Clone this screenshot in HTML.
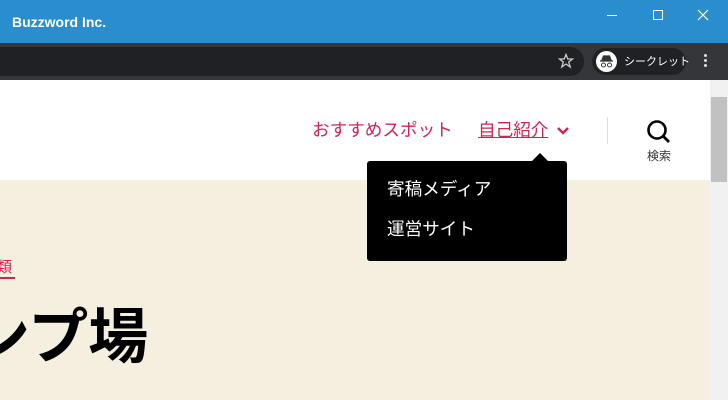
<!DOCTYPE html>
<html><head><meta charset="utf-8"><style>
*{margin:0;padding:0;box-sizing:border-box}
body{width:728px;height:400px;overflow:hidden;position:relative;font-family:"Liberation Sans","Noto Sans CJK JP",sans-serif;background:#fff}
.a{position:absolute}
</style></head><body>
<div class="a" style="left:0;top:0;width:728px;height:43px;background:#2a8dcd"></div>
<div class="a" style="left:12px;top:14px;color:#fff;font-size:14px;font-weight:bold">Buzzword Inc.</div>
<div class="a" style="left:607px;top:15px;width:10px;height:1px;background:#fff"></div>
<div class="a" style="left:653px;top:10px;width:10px;height:10px;border:1px solid #fff"></div>
<svg class="a" style="left:697px;top:9px" width="12" height="12"><path d="M1 1L11 11M11 1L1 11" stroke="#fff" stroke-width="1.2"/></svg>
<div class="a" style="left:0;top:43px;width:728px;height:37px;background:#35363a"></div>
<div class="a" style="left:-20px;top:47px;width:604px;height:29px;border-radius:14px;background:#202124"></div>
<svg class="a" style="left:558px;top:53px" width="16" height="16"><path d="M8 1.5L9.8 6H14.5L10.7 9L12.2 14L8 11L3.8 14L5.3 9L1.5 6H6.2Z" stroke="#ccc" stroke-width="1.3" fill="none"/></svg>
<div class="a" style="left:592px;top:48px;width:94px;height:27px;border-radius:14px;background:#202124"></div>
<div class="a" style="left:596px;top:51px;width:21px;height:21px;border-radius:50%;background:#fff"></div>
<svg class="a" style="left:596px;top:51px" width="21" height="21"><path d="M6 9L7.5 5H13.5L15 9Z M4 10H17" stroke="#333" stroke-width="1.2" fill="#333"/><circle cx="7.5" cy="14" r="2" stroke="#333" fill="none"/><circle cx="13.5" cy="14" r="2" stroke="#333" fill="none"/></svg>
<div class="a" style="left:624px;top:53px;color:#fff;font-size:11px">シークレット</div>
<div class="a" style="left:704px;top:54px;width:3px;height:3px;background:#ddd;border-radius:50%;box-shadow:0 5px 0 #ddd,0 10px 0 #ddd"></div>
<div class="a" style="left:0;top:180px;width:710px;height:220px;background:#f5efe0"></div>
<div class="a" style="left:710px;top:80px;width:18px;height:320px;background:#f1f1f1"></div>
<div class="a" style="left:711px;top:97px;width:16px;height:85px;background:#c1c1c1"></div>
<div class="a" style="left:312px;top:117px;color:#cd2653;font-size:17.6px;white-space:nowrap">おすすめスポット</div>
<div class="a" style="left:478px;top:117px;color:#cd2653;font-size:17.6px;text-decoration:underline;white-space:nowrap">自己紹介</div>
<svg class="a" style="left:556px;top:126px" width="14" height="10"><path d="M2 2L7 7L12 2" stroke="#cd2653" stroke-width="2.5" fill="none"/></svg>
<div class="a" style="left:607px;top:117px;width:1px;height:27px;background:#ddd"></div>
<svg class="a" style="left:646px;top:119px" width="26" height="26"><circle cx="11" cy="11" r="8.5" stroke="#000" stroke-width="2.6" fill="none"/><path d="M17 17L23 23" stroke="#000" stroke-width="2.8"/></svg>
<div class="a" style="left:647px;top:147px;color:#333;font-size:12px">検索</div>
<div class="a" style="left:367px;top:161px;width:200px;height:100px;background:#000;border-radius:3px"></div>
<div class="a" style="left:532px;top:153px;width:0;height:0;border-left:8px solid transparent;border-right:8px solid transparent;border-bottom:8px solid #000"></div>
<div class="a" style="left:387px;top:176px;color:#fff;font-size:17.6px">寄稿メディア</div>
<div class="a" style="left:387px;top:216px;color:#fff;font-size:17.6px">運営サイト</div>
<div class="a" style="left:-3px;top:256px;color:#cd2653;font-size:15px">類</div>
<div class="a" style="left:0;top:277px;width:15px;height:2px;background:#cd2653"></div>
<div class="a" style="left:-30px;top:298px;color:#000;font-size:60px;font-weight:bold;white-space:nowrap;line-height:80px">ンプ場</div>
</body></html>
